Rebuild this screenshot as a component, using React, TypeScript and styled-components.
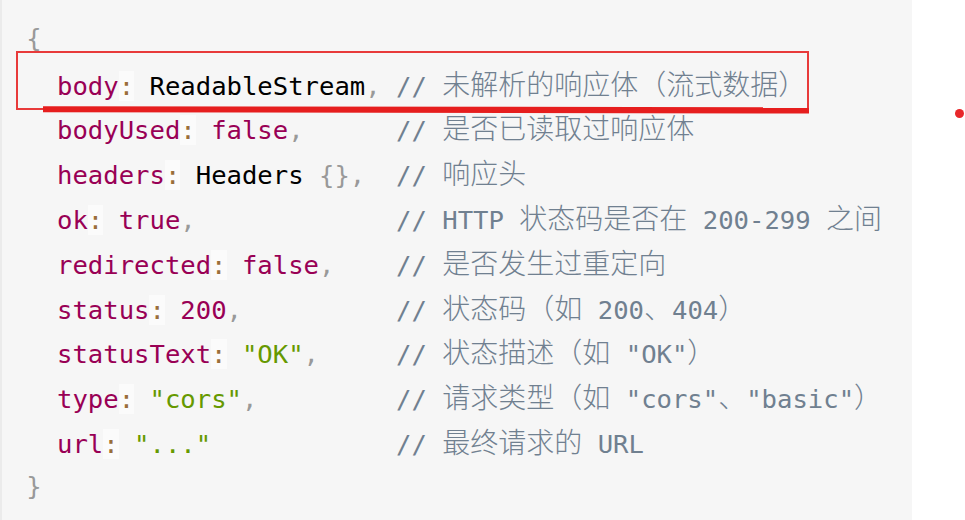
import React from "react";
import styled, { createGlobalStyle } from "styled-components";

const Global = createGlobalStyle`
  html, body { margin: 0; padding: 0; background: #ffffff; }
  #root { width: 965px; height: 520px; overflow: hidden; }
`;

const Page = styled.div`
  display: flex;
  width: 965px;
  height: 520px;
  overflow: hidden;
  background: #ffffff;
`;

const CodePanel = styled.pre`
  position: relative;
  flex: 0 0 912px;
  box-sizing: border-box;
  margin: 0;
  height: 540px;
  padding: 15.8px 0 0 24.2px;
  border-left: 2px solid #ebebeb;
  background: #f6f6f6;
  font-family: "DejaVu Sans Mono", "Liberation Mono", monospace;
  font-size: 25.6px;
  color: #000000;
`;

const Line = styled.div`
  height: 44.8px;
  line-height: 44.8px;
  white-space: pre;
`;

type Kind = "prop" | "op" | "punc" | "bool" | "num" | "str" | "cmt" | "plain";

const colors: Record<Kind, string> = {
  prop: "#990055",
  op: "#9a6e3a",
  punc: "#999999",
  bool: "#990055",
  num: "#990055",
  str: "#669900",
  cmt: "#708090",
  plain: "#000000",
};

const Tok = styled.span<{ $kind: Kind }>`
  color: ${(p) => colors[p.$kind]};
  background: ${(p) => (p.$kind === "op" ? "rgba(255,255,255,0.6)" : "transparent")};
`;

const Cjk = styled.span`
  font-family: "Noto Sans CJK SC", sans-serif;
  font-size: 28px;
  font-weight: 300;
`;

const Annotation = styled.div`
  position: absolute;
  left: 14px;
  top: 51px;
  width: 793px;
  height: 59px;
  box-sizing: border-box;
  border: 2px solid #e83a3a;
  pointer-events: none;
`;

const Underline = styled.svg`
  position: absolute;
  left: 41px;
  top: 104px;
  width: 766px;
  height: 12px;
  overflow: visible;
  pointer-events: none;
`;

const Margin = styled.div`
  position: relative;
  flex: 1;
`;

const Dot = styled.span`
  position: absolute;
  left: 43px;
  top: 109px;
  width: 9px;
  height: 9px;
  border-radius: 50%;
  background: #e8272a;
`;

const CJK_RE = /([\u3000-\u303f\u4e00-\u9fff\uff00-\uffef]+)/;

// Renders comment text, putting CJK / fullwidth chars in a CJK face
const Comment: React.FC<{ text: string }> = ({ text }) => {
  const parts = text.split(CJK_RE);
  return (
    <Tok $kind="cmt">
      {parts.map((p, i) =>
        /[\u3000-\u303f\u4e00-\u9fff\uff00-\uffef]/.test(p) ? (
          <Cjk key={i}>{p}</Cjk>
        ) : (
          <React.Fragment key={i}>{p}</React.Fragment>
        )
      )}
    </Tok>
  );
};

type Row = {
  key: string;
  value: { kind: Kind; text: string }[];
  comma: boolean;
  pad: number;
  comment: string;
};

const rows: Row[] = [
  { key: "body", value: [{ kind: "plain", text: "ReadableStream" }], comma: true, pad: 1, comment: "// 未解析的响应体（流式数据）" },
  { key: "bodyUsed", value: [{ kind: "bool", text: "false" }], comma: true, pad: 6, comment: "// 是否已读取过响应体" },
  { key: "headers", value: [{ kind: "plain", text: "Headers " }, { kind: "punc", text: "{}" }], comma: true, pad: 2, comment: "// 响应头" },
  { key: "ok", value: [{ kind: "bool", text: "true" }], comma: true, pad: 13, comment: "// HTTP 状态码是否在 200-299 之间" },
  { key: "redirected", value: [{ kind: "bool", text: "false" }], comma: true, pad: 4, comment: "// 是否发生过重定向" },
  { key: "status", value: [{ kind: "num", text: "200" }], comma: true, pad: 10, comment: "// 状态码（如 200、404）" },
  { key: "statusText", value: [{ kind: "str", text: "\"OK\"" }], comma: true, pad: 5, comment: "// 状态描述（如 \"OK\"）" },
  { key: "type", value: [{ kind: "str", text: "\"cors\"" }], comma: true, pad: 9, comment: "// 请求类型（如 \"cors\"、\"basic\"）" },
  { key: "url", value: [{ kind: "str", text: "\"...\"" }], comma: false, pad: 12, comment: "// 最终请求的 URL" },
];

export default function App() {
  return (
    <>
      <Global />
      <Page>
        <CodePanel>
          <Line>
            <Tok $kind="punc">{"{"}</Tok>
          </Line>
          {rows.map((r) => (
            <Line key={r.key}>
              {"  "}
              <Tok $kind="prop">{r.key}</Tok>
              <Tok $kind="op">:</Tok>{" "}
              {r.value.map((v, i) => (
                <Tok key={i} $kind={v.kind}>
                  {v.text}
                </Tok>
              ))}
              {r.comma && <Tok $kind="punc">,</Tok>}
              {" ".repeat(r.pad)}
              <Comment text={r.comment} />
            </Line>
          ))}
          <Line>
            <Tok $kind="punc">{"}"}</Tok>
          </Line>
          <Annotation />
          <Underline viewBox="0 0 766 12" preserveAspectRatio="none">
            <path d="M0 2.2 L766 3.2 L766 9.6 L0 8.2 Z" fill="#e61e1e" />
          </Underline>
        </CodePanel>
        <Margin>
          <Dot />
        </Margin>
      </Page>
    </>
  );
}
